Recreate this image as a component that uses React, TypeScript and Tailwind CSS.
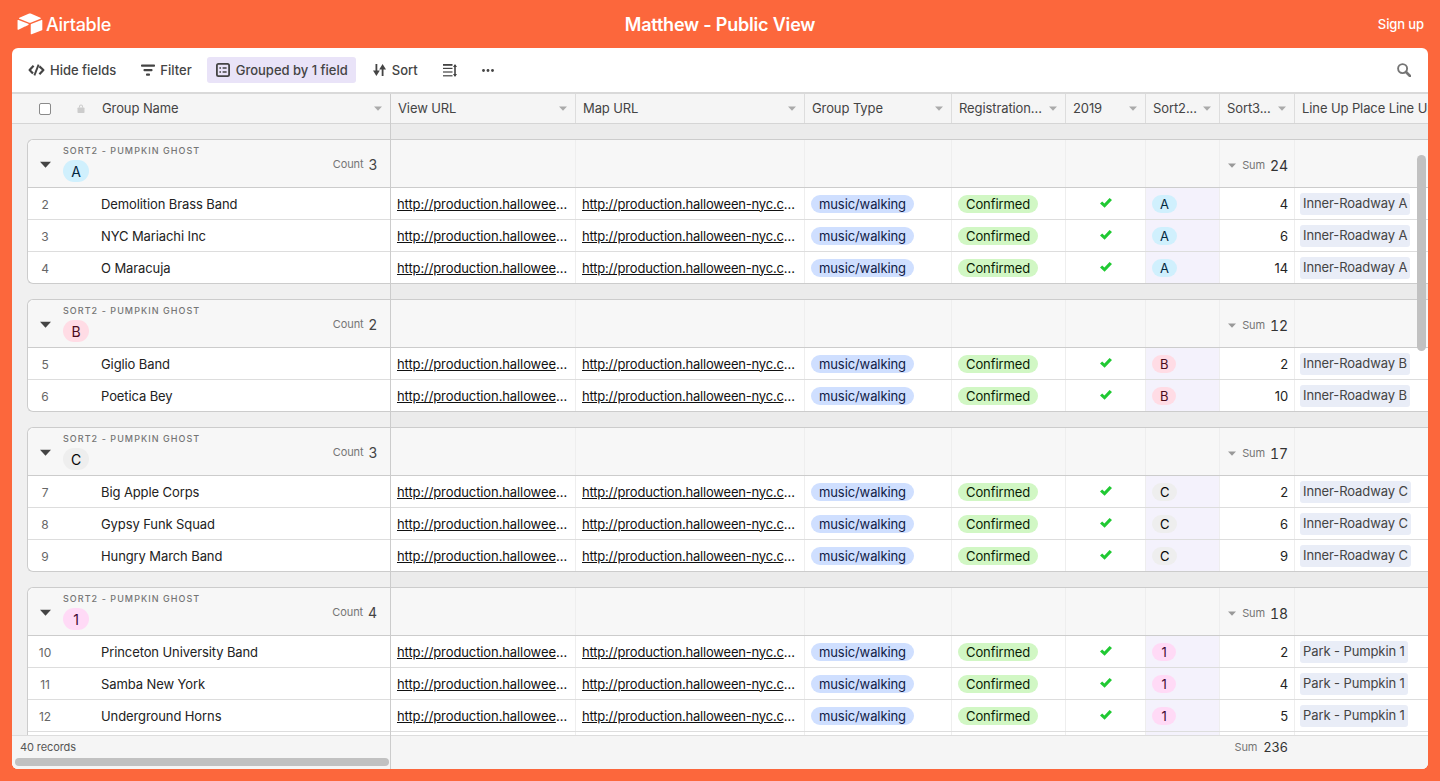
import React from "react";

const font = "font-['Inter','Liberation_Sans',sans-serif]";

interface Tone {
  letter: string;
  pill: string;
}

interface Row {
  id: number;
  name: string;
  sort3: number;
  place: string;
}

interface Group {
  tone: Tone;
  count: number;
  sum: number;
  rows: Row[];
}

const groups: Group[] = [
  {
    tone: { letter: "A", pill: "bg-[#d0f0fd] text-[#04283f]" },
    count: 3,
    sum: 24,
    rows: [
      { id: 2, name: "Demolition Brass Band", sort3: 4, place: "Inner-Roadway A" },
      { id: 3, name: "NYC Mariachi Inc", sort3: 6, place: "Inner-Roadway A" },
      { id: 4, name: "O Maracuja", sort3: 14, place: "Inner-Roadway A" },
    ],
  },
  {
    tone: { letter: "B", pill: "bg-[#ffdce5] text-[#4c0c1c]" },
    count: 2,
    sum: 12,
    rows: [
      { id: 5, name: "Giglio Band", sort3: 2, place: "Inner-Roadway B" },
      { id: 6, name: "Poetica Bey", sort3: 10, place: "Inner-Roadway B" },
    ],
  },
  {
    tone: { letter: "C", pill: "bg-[#eeeeee] text-[#040404]" },
    count: 3,
    sum: 17,
    rows: [
      { id: 7, name: "Big Apple Corps", sort3: 2, place: "Inner-Roadway C" },
      { id: 8, name: "Gypsy Funk Squad", sort3: 6, place: "Inner-Roadway C" },
      { id: 9, name: "Hungry March Band", sort3: 9, place: "Inner-Roadway C" },
    ],
  },
  {
    tone: { letter: "1", pill: "bg-[#ffdaf6] text-[#400832]" },
    count: 4,
    sum: 18,
    rows: [
      { id: 10, name: "Princeton University Band", sort3: 2, place: "Park - Pumpkin 1" },
      { id: 11, name: "Samba New York", sort3: 4, place: "Park - Pumpkin 1" },
      { id: 12, name: "Underground Horns", sort3: 5, place: "Park - Pumpkin 1" },
      { id: 13, name: "", sort3: 7, place: "Park - Pumpkin 1" },
    ],
  },
];

const Caret = ({ className }: { className: string }) => (
  <svg viewBox="0 0 8 5" className={className} fill="currentColor">
    <path d="M0 0.5h8L4 4.8z" />
  </svg>
);

const Logo = () => (
  <svg viewBox="0 0 200 170" className="w-[28px] h-[24px] shrink-0" fill="#fff">
    <path d="M90.04 12.37L24.08 39.66c-3.67 1.52-3.63 6.73.06 8.19l66.24 26.27c5.82 2.31 12.3 2.31 18.12 0l66.23-26.27c3.69-1.46 3.73-6.67.06-8.19L108.83 12.37c-6.02-2.49-12.78-2.49-18.79 0" />
    <path d="M105.31 88.46v65.62c0 3.12 3.15 5.26 6.05 4.1l73.81-28.65c1.68-.67 2.79-2.3 2.79-4.11V59.81c0-3.12-3.15-5.26-6.05-4.11l-73.81 28.65c-1.68.67-2.79 2.3-2.79 4.11" />
    <path d="M88.08 91.85l-21.9 10.57-2.23 1.08-46.24 22.15c-2.93 1.42-6.67-.72-6.67-3.98V60.09c0-1.18.6-2.2 1.41-2.96.34-.34.72-.62 1.12-.84 1.1-.66 2.68-.84 4.02-.31l70.12 27.78c3.56 1.41 3.84 6.41.37 8.09" />
  </svg>
);

const HideIcon = () => (
  <svg viewBox="0 0 17 12" className="w-[17px] h-[12px]" fill="none" stroke="#444" strokeWidth="2.2" strokeLinejoin="round">
    <path d="M5.6 1.8L1.6 6l3.4 3.6" />
    <path d="M11.4 2.4L15.4 6l-4 4.2" />
    <path d="M10.6 0.6L6.4 11.4" strokeWidth="1.9" />
  </svg>
);

const FilterIcon = () => (
  <svg viewBox="0 0 14 12" className="w-[14px] h-[12px]" fill="#444">
    <rect x="0" y="0.5" width="14" height="2.2" rx="0.8" />
    <rect x="2.5" y="5" width="9" height="2.2" rx="0.8" />
    <rect x="5" y="9.5" width="4" height="2.2" rx="0.8" />
  </svg>
);

const GroupIcon = () => (
  <svg viewBox="0 0 14 14" className="w-[14px] h-[14px]" fill="none" stroke="#444">
    <rect x="0.9" y="0.9" width="12.2" height="12.2" rx="1.6" strokeWidth="1.8" />
    <path d="M3.4 4.9h1.6M6.6 4.9h4M3.4 9.1h1.6M6.6 9.1h4" strokeWidth="1.5" />
  </svg>
);

const SortIcon = () => (
  <svg viewBox="0 0 14 12" className="w-[14px] h-[12px]" fill="#444">
    <rect x="2.5" y="0" width="1.8" height="8" />
    <path d="M0 6.6h6.8L3.4 12z" />
    <rect x="8.7" y="4" width="1.8" height="8" />
    <path d="M6.2 5.4h6.8L9.6 0z" />
  </svg>
);

const RowHeightIcon = () => (
  <svg viewBox="0 0 14 13" className="w-[14px] h-[13px]" fill="#444">
    <rect x="0" y="0" width="9.5" height="1.8" />
    <rect x="0" y="3.8" width="9.5" height="1.2" />
    <rect x="0" y="7.4" width="9.5" height="1.2" />
    <rect x="0" y="11.2" width="9.5" height="1.2" />
    <rect x="11.2" y="1" width="1.6" height="11" />
    <path d="M12 0l2 3h-4zM12 13l2-3h-4z" />
  </svg>
);

const DotsIcon = () => (
  <svg viewBox="0 0 12 3" className="w-[12px] h-[3px]" fill="#444">
    <circle cx="1.5" cy="1.5" r="1.4" />
    <circle cx="6" cy="1.5" r="1.4" />
    <circle cx="10.5" cy="1.5" r="1.4" />
  </svg>
);

const SearchIcon = () => (
  <svg viewBox="0 0 14 14" className="w-[14px] h-[14px]" fill="none" stroke="#757575">
    <circle cx="5.6" cy="5.6" r="4.5" strokeWidth="1.9" />
    <path d="M9 9l4 4" strokeWidth="2.6" strokeLinecap="round" />
  </svg>
);

const LockIcon = () => (
  <svg viewBox="0 0 8 9" className="w-[8px] h-[9px]" fill="#cccccc">
    <path d="M2 3.6V2.6a2 2 0 014 0v1h-1V2.6a1 1 0 00-2 0v1z" />
    <rect x="0.5" y="3.5" width="7" height="5.5" rx="0.8" />
  </svg>
);

const CheckIcon = () => (
  <svg viewBox="0 0 12 10" className="w-[12px] h-[10px]" fill="#20c933">
    <path d="M0 5.4L2.2 3.4 4.4 5.4 9.6 0 12 2 4.6 9.8z" />
  </svg>
);

const ToolButton = ({ icon, label, active }: { icon: React.ReactNode; label?: string; active?: boolean }) => (
  <div className={`flex items-center h-[26px] pr-2 rounded-[3px] text-[13px] font-medium text-[#444] tracking-normal ${active ? "bg-[#e9e3f8] -ml-[2px] pl-[9px] gap-[6px]" : "pl-2 gap-[5px]"}`}>
    {icon}
    {label && <span className="pt-[2px]">{label}</span>}
  </div>
);

const columns = [
  { label: "View URL", width: "w-[185px]" },
  { label: "Map URL", width: "w-[229px]" },
  { label: "Group Type", width: "w-[147px]" },
  { label: "Registration...", width: "w-[114px]" },
  { label: "2019", width: "w-[80px]" },
  { label: "Sort2...", width: "w-[74px]" },
  { label: "Sort3...", width: "w-[75px]" },
  { label: "Line Up Place Line Up", width: "w-[160px]" },
];

const url1 = "http://production.halloween-nyc.com/groups/view";
const url2 = "http://production.halloween-nyc.com/groups/map";

const GroupHeaderLeft = ({ group }: { group: Group }) => (
  <div className="flex h-[48px] bg-[#f7f7f7] border-b border-[#cccccc] rounded-tl-md">
    <div className="w-[35px] shrink-0 flex items-center justify-end pt-[1px] pr-[12px]">
      <Caret className="w-[11px] h-[7px] text-[#444]" />
    </div>
    <div className="flex flex-col items-start pt-[5px]">
      <div className="text-[9px] leading-[11px] font-medium tracking-[1.05px] text-[#757575]">SORT2 - PUMPKIN GHOST</div>
      <div className={`mt-[4px] h-[22px] min-w-[26px] px-[8px] rounded-full flex items-center justify-center text-[14px] ${group.tone.pill}`}>
        {group.tone.letter}
      </div>
    </div>
    <div className="ml-auto mr-[13px] flex items-center gap-[5px] self-center pt-[1px]">
      <span className="text-[11px] text-[#757575]">Count</span>
      <span className="text-[14px] text-[#444]">{group.count}</span>
    </div>
  </div>
);

const LeftPane = () => (
  <div className="w-[379px] shrink-0 flex flex-col border-r border-[#cccccc] bg-[#f0f0f0]">
    <div className="h-[30px] shrink-0 flex items-center bg-[#f5f5f5] border-b border-[#d5d5d5]">
      <div className="w-[12px] h-[12px] ml-[27px] border border-[#8a8a8a] rounded-[2px] bg-white" />
      <div className="ml-[26px]"><LockIcon /></div>
      <span className="ml-[17px] text-[13px] text-[#444]">Group Name</span>
      <Caret className="ml-auto mr-[8px] w-[8px] h-[5px] text-[#aaaaaa]" />
    </div>
    <div className="flex-1 min-h-0 overflow-hidden pt-[15px] pl-[15px] flex flex-col gap-[15px]">
      {groups.map((group) => (
        <div key={group.tone.letter} className="shrink-0 border border-r-0 border-[#cccccc] rounded-l-md bg-white">
          <GroupHeaderLeft group={group} />
          {group.rows.map((row, i) => (
            <div
              key={row.id}
              className={`flex items-center pt-[2px] ${i < group.rows.length - 1 ? "h-[32px] border-b border-[#dddddd]" : "h-[31px]"}`}
            >
              <span className="w-[34px] text-center text-[12px] text-[#666]">{row.id}</span>
              <span className="ml-[39px] text-[13px] text-[#222]">{row.name}</span>
            </div>
          ))}
        </div>
      ))}
    </div>
    <div className="h-[34px] shrink-0 bg-[#f5f5f5] border-t border-[#dddddd] flex flex-col pl-[3px] pr-[1px]">
      <div className="text-[11px] leading-[22px] text-[#555] pl-[5px]">40 records</div>
      <div className="h-[8px] rounded-full bg-[#c1c1c1]" />
    </div>
  </div>
);

const Cell = ({ width, children, className = "" }: { width: string; children?: React.ReactNode; className?: string }) => (
  <div className={`${width} shrink-0 h-full border-r border-[#eeeeee] flex items-center overflow-hidden ${className}`}>{children}</div>
);

const RightGroup = ({ group }: { group: Group }) => (
  <div className="shrink-0 border-y border-[#cccccc] bg-white">
    <div className="h-[48px] flex bg-[#f7f7f7] border-b border-[#cccccc]">
      {columns.map((col) =>
        col.label === "Sort3..." ? (
          <Cell key={col.label} width={col.width} className="justify-end pr-[6px] pt-[3px] gap-[5px]">
            <Caret className="w-[8px] h-[5px] mr-[1px] text-[#999]" />
            <span className="text-[11px] text-[#757575]">Sum</span>
            <span className="text-[14px] text-[#333] tabular-nums">{group.sum}</span>
          </Cell>
        ) : (
          <Cell key={col.label} width={col.width} />
        ),
      )}
    </div>
    {group.rows.map((row, i) => (
      <div key={row.id} className={`flex ${i < group.rows.length - 1 ? "h-[32px] border-b border-[#dddddd]" : "h-[31px]"}`}>
        <Cell width={columns[0].width} className="px-[6px] pt-[2px]">
          <span className="truncate text-[13px] text-[#111] underline">{url1}</span>
        </Cell>
        <Cell width={columns[1].width} className="pl-[6px] pr-[4px] pt-[2px]">
          <span className="truncate text-[13px] text-[#111] underline tracking-[-0.2px]">{url2}</span>
        </Cell>
        <Cell width={columns[2].width} className="px-[6px]">
          <span className="h-[18px] px-[8px] rounded-full bg-[#cfdfff] text-[#102046] text-[13px] leading-[18px]">music/walking</span>
        </Cell>
        <Cell width={columns[3].width} className="px-[6px]">
          <span className="h-[18px] px-[8px] rounded-full bg-[#d1f7c4] text-[#0b1d05] text-[13px] leading-[18px]">Confirmed</span>
        </Cell>
        <Cell width={columns[4].width} className="justify-center pb-[1px]">
          <CheckIcon />
        </Cell>
        <Cell width={columns[5].width} className="bg-[#f4f2fc] px-[6px]">
          <span className={`h-[18px] min-w-[24px] px-[8px] rounded-full text-center text-[13px] leading-[18px] ${group.tone.pill}`}>{group.tone.letter}</span>
        </Cell>
        <Cell width={columns[6].width} className="justify-end pr-[6px] pt-[2px]">
          <span className="text-[13px] text-[#222]">{row.sort3}</span>
        </Cell>
        <Cell width={columns[7].width} className="px-[5px]">
          <span className="h-[22px] px-[3px] rounded-[3px] bg-[#e9edf7] text-[#444] text-[13px] leading-[21px] whitespace-nowrap">{row.place}</span>
        </Cell>
      </div>
    ))}
  </div>
);

const RightPane = () => (
  <div className="flex-1 min-w-0 flex flex-col overflow-hidden bg-[#ebebeb]">
    <div className="h-[30px] shrink-0 flex bg-[#f5f5f5] border-b border-[#d5d5d5]">
      {columns.map((col, i) => (
        <div key={col.label} className={`${col.width} shrink-0 flex items-center pl-[7px] pr-[8px] border-r border-[#dddddd] overflow-hidden`}>
          <span className="text-[13px] text-[#444] whitespace-nowrap">{col.label}</span>
          {i < columns.length - 1 && <Caret className="ml-auto shrink-0 w-[8px] h-[5px] text-[#aaaaaa]" />}
        </div>
      ))}
    </div>
    <div className="flex-1 min-h-0 overflow-hidden pt-[15px] flex flex-col gap-[15px]">
      {groups.map((group) => (
        <RightGroup key={group.tone.letter} group={group} />
      ))}
    </div>
    <div className="h-[34px] shrink-0 bg-[#f5f5f5] border-t border-[#dddddd] flex">
      <div className="w-[903px] shrink-0 flex items-center justify-end pr-[6px] pb-[10px] gap-[6px]">
        <span className="text-[11px] text-[#757575]">Sum</span>
        <span className="text-[13px] text-[#333] tracking-[0.2px]">236</span>
      </div>
    </div>
  </div>
);

export default function App() {
  return (
    <div className={`h-screen flex flex-col bg-[#fc673c] overflow-hidden tracking-[-0.1px] ${font}`}>
      <header className="h-[48px] shrink-0 grid grid-cols-3 items-center px-[16px] text-white">
        <div className="flex items-center gap-[2px]">
          <Logo />
          <span className="text-[18px] font-medium tracking-[-0.3px]">Airtable</span>
        </div>
        <div className="text-center text-[18px] font-semibold tracking-[-0.2px]">Matthew - Public View</div>
        <div className="text-right text-[13px] font-medium pt-[1px]">Sign up</div>
      </header>
      <main className="relative flex-1 min-h-0 mx-[12px] mb-[12px] bg-white rounded-md overflow-hidden flex flex-col">
        <div className="h-[46px] shrink-0 flex items-center gap-[9px] pl-[8px] pr-[17px] border-b-2 border-[#d9d9d9]">
          <ToolButton icon={<HideIcon />} label="Hide fields" />
          <ToolButton icon={<FilterIcon />} label="Filter" />
          <ToolButton icon={<GroupIcon />} label="Grouped by 1 field" active />
          <ToolButton icon={<SortIcon />} label="Sort" />
          <ToolButton icon={<RowHeightIcon />} />
          <ToolButton icon={<DotsIcon />} />
          <div className="ml-auto"><SearchIcon /></div>
        </div>
        <div className="flex-1 min-h-0 flex">
          <LeftPane />
          <RightPane />
        </div>
        <div className="absolute left-[1405px] top-[107px] w-[9px] h-[196px] rounded-full bg-[#c1c1c1]" />
      </main>
    </div>
  );
}
